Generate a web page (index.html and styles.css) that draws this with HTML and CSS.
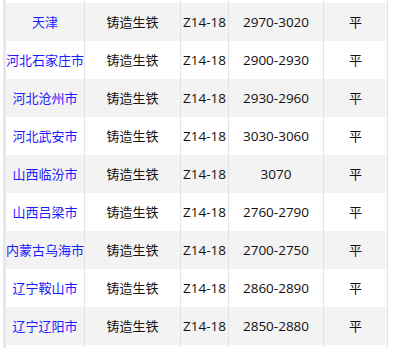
FILE: index.html
```html
<!DOCTYPE html>
<html lang="zh-CN">
<head>
<meta charset="utf-8">
<link rel="stylesheet" href="styles.css">
</head>
<body>
<div class="wrap">
<table class="price">
  <colgroup>
    <col class="c1"><col class="c2"><col class="c3"><col class="c4"><col class="c5">
  </colgroup>
  <tbody>
    <tr class="spacer"><td></td><td></td><td></td><td></td><td></td></tr>
    <tr class="odd"><td><a class="city">天津</a></td><td>铸造生铁</td><td class="num">Z14-18</td><td class="num">2970-3020</td><td>平</td></tr>
    <tr><td><a class="city">河北石家庄市</a></td><td>铸造生铁</td><td class="num">Z14-18</td><td class="num">2900-2930</td><td>平</td></tr>
    <tr class="odd"><td><a class="city">河北沧州市</a></td><td>铸造生铁</td><td class="num">Z14-18</td><td class="num">2930-2960</td><td>平</td></tr>
    <tr><td><a class="city">河北武安市</a></td><td>铸造生铁</td><td class="num">Z14-18</td><td class="num">3030-3060</td><td>平</td></tr>
    <tr class="odd"><td><a class="city">山西临汾市</a></td><td>铸造生铁</td><td class="num">Z14-18</td><td class="num">3070</td><td>平</td></tr>
    <tr><td><a class="city">山西吕梁市</a></td><td>铸造生铁</td><td class="num">Z14-18</td><td class="num">2760-2790</td><td>平</td></tr>
    <tr class="odd"><td><a class="city">内蒙古乌海市</a></td><td>铸造生铁</td><td class="num">Z14-18</td><td class="num">2700-2750</td><td>平</td></tr>
    <tr><td><a class="city">辽宁鞍山市</a></td><td>铸造生铁</td><td class="num">Z14-18</td><td class="num">2860-2890</td><td>平</td></tr>
    <tr class="odd"><td><a class="city">辽宁辽阳市</a></td><td>铸造生铁</td><td class="num">Z14-18</td><td class="num">2850-2880</td><td>平</td></tr>
    <tr><td></td><td></td><td></td><td></td><td></td></tr>
  </tbody>
</table>
</div>
</body>
</html>
```
FILE: styles.css
```css
html, body {
  margin: 0;
  padding: 0;
  background: #fff;
}
.wrap {
  width: 394px;
  height: 348px;
  overflow: hidden;
  padding-left: 3px;
  box-sizing: border-box;
}
.price {
  border-collapse: separate;
  border-spacing: 0;
  table-layout: fixed;
  width: 385px;
  border-left: 3px solid #e8e8e8;
  font-family: "Noto Sans CJK SC", "Noto Sans", sans-serif;
  font-size: 13px;
  color: #111;
}
.c1 { width: 79px; }
.c2 { width: 96px; }
.c3 { width: 48px; }
.c4 { width: 95px; }
.c5 { width: 64px; }
.price td {
  box-sizing: border-box;
  border-right: 1px solid #e4e4e4;
  height: 38px;
  padding: 0;
  text-align: center;
  vertical-align: middle;
  white-space: nowrap;
  overflow: hidden;
  line-height: 18px;
}
.price tr.spacer td {
  height: 3px;
  line-height: 0;
}
.price tr.odd td {
  background: #f3f3f3;
}
.num {
  font-family: "Open Sans", "Noto Sans", sans-serif;
  font-size: 13.5px;
}
.city {
  color: #1a1aff;
  text-decoration: none;
}
```
